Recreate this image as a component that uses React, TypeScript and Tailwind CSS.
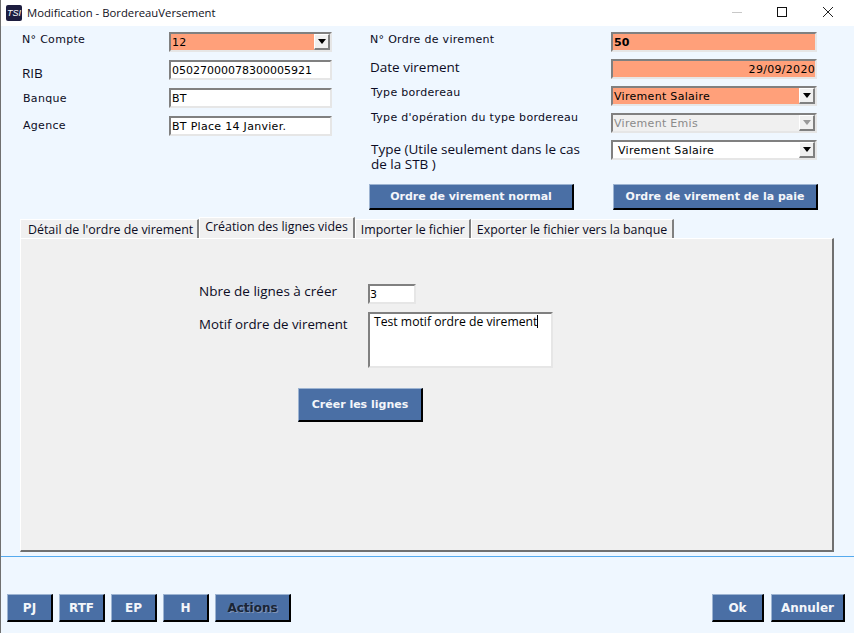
import React from 'react';

const sunken = 'border-2 border-t-[#808080] border-l-[#808080] border-r-[#e6e6e6] border-b-[#e6e6e6]';
const verdana = "font-['DejaVu_Sans',sans-serif] text-[11px] text-[#0c0c24]";
const label = `${verdana} tracking-[0.3px]`;
const tahoma = "font-['Open_Sans',sans-serif] text-[13.5px] text-[#0c0c24]";

function Field({ children, className = '' }: { children?: React.ReactNode; className?: string }) {
  return (
    <div className={`${sunken} h-[20px] flex items-center overflow-hidden whitespace-nowrap ${verdana} leading-[18px] text-black ${className}`}>
      {children}
    </div>
  );
}

function FieldText({ children, tight }: { children: React.ReactNode; tight?: boolean }) {
  return <span className={`pt-[2px] ${tight ? '' : 'tracking-[0.3px]'}`}>{children}</span>;
}

function ComboArrow({ disabled }: { disabled?: boolean }) {
  return (
    <span className="ml-auto w-[16px] h-[16px] bg-[#f0f0f0] border-l border-t border-white border-r-2 border-b-2 border-r-[#808080] border-b-[#808080] flex items-center justify-center shrink-0">
      <svg width="8" height="5" viewBox="0 0 8 5">
        <path d="M0 0h8L4 5z" fill={disabled ? '#999999' : '#000000'} />
      </svg>
    </span>
  );
}

function Btn({ children, className = '' }: { children: React.ReactNode; className?: string }) {
  return (
    <button className={`bg-[#4a6fa5] border border-t-[#9db4d2] border-l-[#9db4d2] border-r-2 border-b-2 border-r-black border-b-black font-['DejaVu_Sans',sans-serif] font-bold text-[11px] text-[#f4f6fa] flex items-center justify-center whitespace-nowrap ${className}`}>
      {children}
    </button>
  );
}

function LeftRow({ label, labelClass, children }: { label: string; labelClass: string; children: React.ReactNode }) {
  return (
    <div className="flex h-[20px] mb-[8px]">
      <span className={`w-[147px] ${labelClass}`}>{label}</span>
      <div className="w-[163px]">{children}</div>
    </div>
  );
}

function RightRow({ label, labelClass, children }: { label: React.ReactNode; labelClass: string; children: React.ReactNode }) {
  return (
    <div className="flex h-[20px] mb-[7px]">
      <span className={`w-[241px] ${labelClass}`}>{label}</span>
      <div className="w-[206px]">{children}</div>
    </div>
  );
}

export default function App() {
  const tabs = [
    { text: 'Détail de l\'ordre de virement', cls: 'h-[19px] pl-[7px] pr-[4px] leading-[19px]' },
    { text: 'Création des lignes vides', cls: 'h-[21px] px-[5px] leading-[17px]' },
    { text: 'Importer le fichier', cls: 'h-[19px] pl-[5px] pr-[4px] leading-[19px]' },
    { text: 'Exporter le fichier vers la banque', cls: 'h-[19px] px-[5px] leading-[19px]' },
  ];
  return (
    <div className="w-[854px] h-[633px] bg-[#eff7ff] border-l border-[#707070] flex flex-col overflow-hidden">
      {/* title bar */}
      <div className="h-[26px] bg-white flex items-center pl-[5px] shrink-0">
        <div className="w-[16px] h-[16px] bg-[#1d1d3f] rounded-[2px] flex items-center justify-center mr-[5px]">
          <span className="font-['Liberation_Sans',sans-serif] italic text-[9px] leading-none text-white">TSI</span>
        </div>
        <span className="font-['Open_Sans',sans-serif] text-[11.3px] text-[#111122]">Modification - BordereauVersement</span>
        <div className="ml-auto flex items-center mb-[2px]">
          <svg width="12" height="12" viewBox="0 0 12 12" className="mr-[33px]">
            <path d="M1 6.5h10" stroke="#c8c8c8" />
          </svg>
          <svg width="12" height="12" viewBox="0 0 12 12" className="mr-[34px]">
            <rect x="1.5" y="1.5" width="9" height="9" fill="none" stroke="#111111" />
          </svg>
          <svg width="12" height="12" viewBox="0 0 12 12" className="mr-[20px]">
            <path d="M1 1l10 10M11 1L1 11" stroke="#222222" />
          </svg>
        </div>
      </div>

      {/* header form */}
      <div className="flex pt-[6px] shrink-0">
        <div className="ml-[21px] w-[310px]">
          <LeftRow label="N° Compte" labelClass={`${label} leading-[16px]`}>
            <Field className="bg-[#ffa07a] pl-[1px]"><FieldText>12</FieldText><ComboArrow /></Field>
          </LeftRow>
          <LeftRow label="RIB" labelClass={`${tahoma} leading-[26px]`}>
            <Field className="bg-white pl-[1px]"><FieldText tight>05027000078300005921</FieldText></Field>
          </LeftRow>
          <LeftRow label="Banque" labelClass={`${label} pl-[1px] leading-[22px]`}>
            <Field className="bg-white pl-[1px]"><FieldText>BT</FieldText></Field>
          </LeftRow>
          <LeftRow label="Agence" labelClass={`${label} pl-[1px] leading-[20px]`}>
            <Field className="bg-white pl-[1px]"><FieldText>BT Place 14 Janvier.</FieldText></Field>
          </LeftRow>
        </div>

        <div className="ml-[38px]">
          <RightRow label="N° Ordre de virement" labelClass={`${label} leading-[16px]`}>
            <Field className="bg-[#ffa07a] pl-[1px] font-bold"><FieldText tight>50</FieldText></Field>
          </RightRow>
          <RightRow label="Date virement" labelClass={`${tahoma} leading-[16px]`}>
            <Field className="bg-[#ffa07a] justify-end"><FieldText>29/09/2020</FieldText></Field>
          </RightRow>
          <RightRow label="Type bordereau" labelClass={`${label} pl-[1px] leading-[14px]`}>
            <Field className="bg-[#ffa07a] pl-[1px]"><FieldText>Virement Salaire</FieldText><ComboArrow /></Field>
          </RightRow>
          <RightRow label="Type d'opération du type bordereau" labelClass={`${label} pl-[1px] leading-[10px]`}>
            <Field className="bg-[#f0f0f0] pl-[1px] !text-[#8a8a8a]"><FieldText>Virement Emis</FieldText><ComboArrow disabled /></Field>
          </RightRow>
          <RightRow
            label={<span className="block w-[225px]">Type (Utile seulement dans le cas de la STB )</span>}
            labelClass={`${tahoma} pl-[1px] leading-[15px] pt-[2px]`}
          >
            <Field className="bg-white pl-[5px]"><FieldText>Virement Salaire</FieldText><ComboArrow /></Field>
          </RightRow>
          <div className="flex mt-[24px] -ml-[1px]">
            <Btn className="w-[205px] h-[26px] pt-[1px]">Ordre de virement normal</Btn>
            <Btn className="w-[205px] h-[26px] pt-[1px] ml-[39px]">Ordre de virement de la paie</Btn>
          </div>
        </div>
      </div>

      {/* tabs */}
      <div className="flex items-end h-[21px] mt-[7px] ml-[19px] shrink-0 font-['Open_Sans',sans-serif] text-[12.4px] text-[#0c0c24]">
        {tabs.map((t) => (
          <div
            key={t.text}
            className={`bg-[#f0f0f0] border-r-2 border-r-[#808080] border-t border-l border-white whitespace-nowrap ${t.cls}`}
          >
            {t.text}
          </div>
        ))}
      </div>

      {/* tab panel */}
      <div className="ml-[19px] w-[814px] h-[314px] bg-[#f0f0f0] border-t border-l border-white border-r-2 border-b-2 border-r-[#707070] border-b-[#707070] shrink-0 pt-[45px]">
        <div className="flex ml-[178px] h-[20px] mb-[8px]">
          <span className={`w-[169px] ${tahoma} leading-[15px]`}>Nbre de lignes à créer</span>
          <div className={`${sunken} w-[48px] h-[20px] bg-white ${verdana} text-black leading-[18px]`}>3</div>
        </div>
        <div className="flex ml-[178px]">
          <span className={`w-[169px] font-['Open_Sans',sans-serif] text-[13.3px] text-[#0c0c24] leading-[24px]`}>Motif ordre de virement</span>
          <div className={`${sunken} w-[185px] h-[56px] bg-white font-['Open_Sans',sans-serif] text-[12.2px] text-black pl-[4px] leading-[16px]`}>
            Test motif ordre de virement<span className="inline-block w-px h-[13px] bg-black align-[-2px]" />
          </div>
        </div>
        <Btn className="w-[125px] h-[34px] ml-[277px] mt-[20px] pt-[1px]">Créer les lignes</Btn>
      </div>

      {/* footer */}
      <div className="h-px bg-[#55aaee] mt-[4px] shrink-0" />
      <div className="flex mt-[37px] pl-[6px] pr-[9px]">
        <div className="flex gap-[6px]">
          <Btn className="w-[46px] h-[28px] text-[12px]">PJ</Btn>
          <Btn className="w-[46px] h-[28px] text-[12px]">RTF</Btn>
          <Btn className="w-[46px] h-[28px] text-[12px]">EP</Btn>
          <Btn className="w-[46px] h-[28px] text-[12px]">H</Btn>
          <Btn className="w-[76px] h-[28px] text-[12px] !text-[#1a2536] [text-shadow:1px_1px_0_#7f93b5]">Actions</Btn>
        </div>
        <div className="ml-auto flex gap-[7px]">
          <Btn className="w-[52px] h-[28px] text-[12px]">Ok</Btn>
          <Btn className="w-[74px] h-[28px] text-[12px]">Annuler</Btn>
        </div>
      </div>
    </div>
  );
}
